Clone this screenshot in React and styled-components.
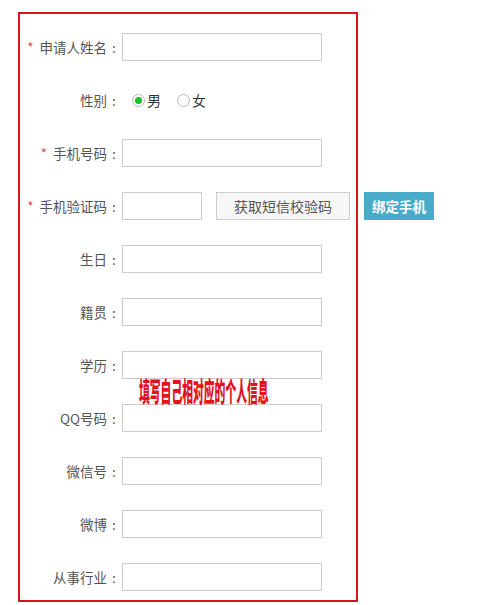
import React, { useState } from "react";
import styled, { createGlobalStyle } from "styled-components";

const GlobalStyle = createGlobalStyle`
  body {
    margin: 0;
    background: #ffffff;
    font-family: "Noto Sans CJK SC", "Microsoft YaHei", sans-serif;
  }
`;

const Frame = styled.div`
  position: relative;
  box-sizing: border-box;
  width: 340px;
  height: 590px;
  margin: 12px 0 0 18px;
  padding-top: 19px;
  border: 2px solid #d3161d;
  display: flex;
  flex-direction: column;
  gap: 25px;
`;

const Row = styled.div`
  display: flex;
  align-items: center;
  height: 28px;
`;

const Label = styled.label`
  width: 101px;
  margin-right: 1px;
  flex-shrink: 0;
  text-align: right;
  font-size: 13.5px;
  color: #555;
  white-space: nowrap;
`;

const Colon = styled.span`
  display: inline-block;
  width: 14px;
  text-align: center;
`;

const Star = styled.span`
  color: #e2483d;
  margin-right: 6px;
`;

const Input = styled.input`
  box-sizing: border-box;
  flex-shrink: 0;
  width: ${(p) => p.$width || 200}px;
  height: 28px;
  margin: 0;
  padding: 0 6px;
  border: 1px solid #cccccc;
  outline: none;
  font-size: 13px;
  background: #fff;
`;

const Radios = styled.div`
  display: flex;
  align-items: center;
  gap: 16px;
  margin-left: 10px;
`;

const RadioLabel = styled.span`
  display: flex;
  align-items: center;
  gap: 2px;
  font-size: 14px;
  color: #333;
  cursor: pointer;
`;

const RadioDot = styled.span`
  box-sizing: border-box;
  width: 13px;
  height: 13px;
  border-radius: 50%;
  border: 1px solid #b8b8b8;
  background: #fff;
  display: flex;
  align-items: center;
  justify-content: center;

  &::after {
    content: "";
    width: 7px;
    height: 7px;
    border-radius: 50%;
    background: ${(p) => (p.$on ? "#1bbf2a" : "transparent")};
  }
`;

const CodeButton = styled.button`
  box-sizing: border-box;
  flex-shrink: 0;
  height: 28px;
  width: 134px;
  margin-left: 14px;
  border: 1px solid #cccccc;
  background: #f7f7f7;
  color: #555;
  font-family: inherit;
  font-size: 14px;
  padding: 0;
  white-space: nowrap;
  cursor: pointer;
`;

const BindButton = styled.button`
  box-sizing: border-box;
  flex-shrink: 0;
  height: 28px;
  width: 70px;
  margin-left: 14px;
  border: none;
  background: #47abc9;
  color: #fff;
  font-family: inherit;
  font-size: 13.5px;
  font-weight: bold;
  padding: 0;
  white-space: nowrap;
  cursor: pointer;
`;

const Note = styled.div`
  position: absolute;
  left: 119px;
  top: 363px;
  font-size: 27px;
  line-height: 1;
  font-weight: 900;
  color: #e3121b;
  white-space: nowrap;
  transform: scaleX(0.4);
  transform-origin: left top;
`;

const fields = ["生日", "籍贯", "学历", "QQ号码", "微信号", "微博", "从事行业"];

function FieldLabel({ required, children }) {
  return (
    <Label>
      {required && <Star>*</Star>}
      {children}
      <Colon>:</Colon>
    </Label>
  );
}

function App() {
  const [gender, setGender] = useState("male");

  return (
    <>
      <GlobalStyle />
      <Frame>
        <Row>
          <FieldLabel required>申请人姓名</FieldLabel>
          <Input />
        </Row>

        <Row>
          <FieldLabel>性别</FieldLabel>
          <Radios>
            <RadioLabel onClick={() => setGender("male")}>
              <RadioDot $on={gender === "male"} />男
            </RadioLabel>
            <RadioLabel onClick={() => setGender("female")}>
              <RadioDot $on={gender === "female"} />女
            </RadioLabel>
          </Radios>
        </Row>

        <Row>
          <FieldLabel required>手机号码</FieldLabel>
          <Input />
        </Row>

        <Row>
          <FieldLabel required>手机验证码</FieldLabel>
          <Input $width={80} />
          <CodeButton>获取短信校验码</CodeButton>
          <BindButton>绑定手机</BindButton>
        </Row>

        {fields.map((f) => (
          <Row key={f}>
            <FieldLabel>{f}</FieldLabel>
            <Input />
          </Row>
        ))}

        <Note>填写自己相对应的个人信息</Note>
      </Frame>
    </>
  );
}

export default App;
